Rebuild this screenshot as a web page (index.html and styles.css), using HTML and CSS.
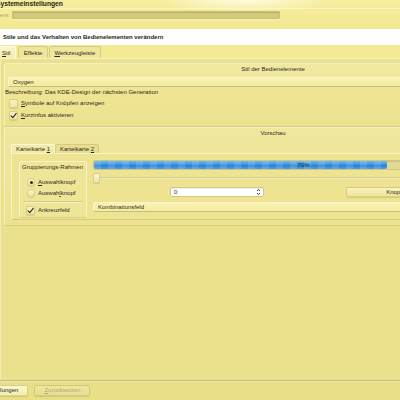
FILE: index.html
```html
<!DOCTYPE html>
<html lang="de">
<head>
<meta charset="utf-8">
<title>Systemeinstellungen</title>
<link rel="stylesheet" href="styles.css">
</head>
<body>
<div class="window">
  <div class="header">
    <div class="title"><span class="title-text">Systemeinstellungen</span></div>
    <div class="search">
      <span class="search-label">ers:</span>
      <div class="search-field"></div>
    </div>
  </div>
  <div class="banner">Stile und das Verhalten von Bedienelementen verändern</div>
  <div class="tabs">
    <div class="tab active"><u>S</u>til</div>
    <div class="tab">Effekte</div>
    <div class="tab"><u>W</u>erkzeugleiste</div>
  </div>
  <div class="tabpanel">
    <div class="group style-group">
      <div class="group-title">Stil der Bedienelemente</div>
      <div class="combo style-combo">Oxygen</div>
      <div class="desc">Beschreibung: Das KDE-Design der nächsten Generation</div>
      <div class="check-row">
        <span class="checkbox"></span>
        <span><u>S</u>ymbole auf Knöpfen anzeigen</span>
      </div>
      <div class="check-row second">
        <span class="checkbox"><svg viewBox="0 0 9 9" width="9" height="9"><path d="M2 4.8 L3.8 6.6 L7.2 2.4" fill="none" stroke="#2e2c1e" stroke-width="1.1" stroke-linecap="round" stroke-linejoin="round"/></svg></span>
        <span><u>K</u>urzinfos aktivieren</span>
      </div>
    </div>
    <div class="group preview-group">
      <div class="group-title">Vorschau</div>
      <div class="inner-tabs">
        <div class="itab active">Karteikarte <u>1</u></div>
        <div class="itab">Karteikarte <u>2</u></div>
      </div>
      <div class="inner-page">
        <div class="groupbox">
          <div class="gb-title">Gruppierungs-Rahmen</div>
          <div class="radio-row first">
            <span class="radio checked"></span>
            <span><u>A</u>uswahlknopf</span>
          </div>
          <div class="radio-row">
            <span class="radio"></span>
            <span>Auswah<u>l</u>knopf</span>
          </div>
          <div class="gb-sep"></div>
          <div class="gb-check">
            <span class="checkbox"><svg viewBox="0 0 9 9" width="9" height="9"><path d="M2 4.8 L3.8 6.6 L7.2 2.4" fill="none" stroke="#2e2c1e" stroke-width="1.1" stroke-linecap="round" stroke-linejoin="round"/></svg></span>
            <span>Ankreuzfeld</span>
          </div>
        </div>
        <div class="controls">
          <div class="progress">
            <div class="progress-fill" style="width:70%"></div>
            <span class="progress-label">70%</span>
          </div>
          <div class="slider">
            <span class="slider-handle"></span>
            <span class="slider-groove"></span>
          </div>
          <div class="spin-row">
            <div class="spinbox">
              <span>0</span>
              <svg class="spin-arrows" viewBox="0 0 5 8" width="5" height="8"><path d="M1 3 L2.5 1.4 L4 3 M1 5 L2.5 6.6 L4 5" fill="none" stroke="#2e2c1e" stroke-width="0.9"/></svg>
            </div>
            <div class="button knopf">Knopf</div>
          </div>
          <div class="combo preview-combo">Kombinationsfeld</div>
        </div>
      </div>
    </div>
  </div>
  <div class="footer">
    <div class="button defaults">Voreinstellungen</div>
    <div class="button disabled"><u>Z</u>urücksetzen</div>
  </div>
</div>
</body>
</html>
```

FILE: styles.css
```css
* { box-sizing: border-box; margin: 0; padding: 0; }
html, body { width: 400px; height: 400px; overflow: hidden; }
body {
  background: #e9df87;
  font-family: "Liberation Sans", Arial, sans-serif;
  font-size: 6px;
  line-height: 1;
  color: #2b2a1e;
}
u { text-decoration: underline; text-underline-offset: 1px; text-decoration-thickness: 0.5px; }

.window {
  width: 545px;
  height: 400px;
  display: flex;
  flex-direction: column;
}

/* header */
.header {
  height: 29px;
  background:
    radial-gradient(ellipse 90px 12px at 245px 0, #fffbe0 0%, rgba(255, 251, 224, 0) 100%),
    linear-gradient(#f6ed9e, #f3e890);
}
.title {
  height: 9px;
  border-bottom: 1px solid rgba(255, 255, 255, 0.45);
  font-weight: bold;
  font-size: 6.7px;
  line-height: 8px;
  color: #1f1e14;
}
.title-text { display: inline-block; margin-left: -4px; }
.search {
  display: flex;
  align-items: flex-start;
  padding-top: 2px;
  height: 20px;
}
.search-label {
  width: 12px;
  color: #aaa374;
  line-height: 8px;
  overflow: hidden;
}
.search-field {
  width: 268px;
  height: 8px;
  background: #d4ca7c;
  border: 1px solid #c8be70;
  border-radius: 1px;
  box-shadow: inset 0 1px 1px rgba(0, 0, 0, 0.12), 0 1px 0 rgba(255, 255, 255, 0.4);
}

/* banner */
.banner {
  height: 16px;
  background: #ffffff;
  font-weight: bold;
  line-height: 16px;
  padding-left: 3px;
  color: #1e1e1a;
}

/* top tabs */
.tabs {
  height: 13px;
  background: #f4ea94;
  display: flex;
  align-items: flex-end;
  gap: 1px;
  margin-left: -4px;
}
.tab {
  height: 12px;
  line-height: 12px;
  padding: 0 4.5px;
  background: #efe59b;
  border: 1px solid rgba(196, 186, 116, 0.6);
  border-bottom: none;
  border-radius: 2px 2px 0 0;
  color: #2b2a1e;
}
.tab.active {
  padding: 0 5px;
  margin-right: 1px;
  background: linear-gradient(#fbf5c6, #f4eca8);
  border-color: rgba(255, 255, 255, 0.7);
}

/* tab panel */
.tabpanel {
  flex: 1;
  background: #ebe18c;
  border-top: 1px solid rgba(255, 255, 255, 0.55);
  border-left: 1px solid rgba(255, 255, 255, 0.35);
  padding: 4px 0 0 3px;
}

.group {
  width: 538px;
  border: 1px solid rgba(255, 255, 255, 0.45);
  border-bottom-color: rgba(170, 160, 90, 0.35);
  border-radius: 3px;
}
.group-title {
  height: 11px;
  line-height: 11px;
  text-align: center;
}

.style-group {
  height: 64px;
  background: linear-gradient(#f2e9a0 0, #f1e89f 14px, #eee494 26px, #ece28e 100%);
}
.combo {
  height: 10px;
  line-height: 9px;
  padding-left: 4px;
  background: linear-gradient(#faf2b0, #f3eba0);
  border: 1px solid rgba(255, 255, 255, 0.5);
  border-bottom: 1px solid #c6bc7c;
  border-radius: 2px;
}
.style-combo {
  margin: 2px 3px 0 3px;
}
.desc {
  margin-top: 1px;
  height: 8px;
  line-height: 8px;
}
.check-row {
  display: flex;
  align-items: center;
  gap: 3px;
  height: 10px;
  margin-top: 2px;
  padding-left: 4px;
}
.checkbox {
  width: 9px;
  height: 9px;
  flex: none;
  border-radius: 2px;
  background: linear-gradient(#f9f2c0, #efe6a4);
  border: 1px solid rgba(190, 180, 110, 0.55);
  box-shadow: 0 1px 1px rgba(120, 110, 50, 0.2);
  display: flex;
  align-items: center;
  justify-content: center;
}
.checkbox svg { display: block; margin: -1px; }

.preview-group {
  height: 99px;
  background: linear-gradient(#efe79c 0, #efe69b 26px, #ece28f 100%);
}
.inner-tabs {
  display: flex;
  margin: 5px 0 0 6px;
  height: 9px;
}
.itab {
  height: 9px;
  line-height: 9px;
  padding: 0 4px;
  background: #e8de90;
  border: 1px solid rgba(196, 186, 116, 0.55);
  border-bottom: none;
  border-radius: 2px 2px 0 0;
}
.itab.active {
  background: #f3eba5;
  border-color: rgba(255, 255, 255, 0.65);
}
.inner-page {
  margin: 0 6px;
  height: 67px;
  display: flex;
  gap: 6px;
  padding: 7px 0 0 7px;
  background: #ede391;
  border: 1px solid rgba(255, 255, 255, 0.5);
  border-bottom-color: rgba(170, 160, 90, 0.35);
  border-radius: 0 3px 3px 3px;
}

.groupbox {
  width: 68px;
  height: 57px;
  flex: none;
  border: 1px solid rgba(255, 255, 255, 0.55);
  border-bottom-color: rgba(170, 160, 90, 0.3);
  border-radius: 3px;
  background: #eee596;
  padding: 0 0 0 7px;
}
.gb-title {
  height: 10px;
  line-height: 10px;
  margin-left: -5px;
}
.radio-row {
  display: flex;
  align-items: center;
  gap: 3px;
  height: 8px;
  margin-top: 3px;
}
.radio-row.first { margin-top: 6px; }
.radio {
  width: 8px;
  height: 8px;
  flex: none;
  border-radius: 50%;
  background: linear-gradient(#faf3c4, #efe6a4);
  border: 1px solid rgba(190, 180, 110, 0.45);
  box-shadow: 0 1px 1px rgba(120, 110, 50, 0.2);
  display: flex;
  align-items: center;
  justify-content: center;
}
.radio.checked::after {
  content: "";
  width: 3px;
  height: 3px;
  border-radius: 50%;
  background: #2e2c1e;
}
.gb-sep {
  margin: 4px 4px 0 -3px;
  height: 2px;
  border-top: 1px solid rgba(180, 170, 100, 0.45);
  border-bottom: 1px solid rgba(255, 255, 255, 0.45);
}
.gb-check {
  display: flex;
  align-items: center;
  gap: 3px;
  height: 10px;
  margin: 2px 0 0 -1px;
}

.controls {
  width: 421px;
  margin-top: -1px;
  display: flex;
  flex-direction: column;
}
.progress {
  position: relative;
  height: 10px;
  background: #e2d895;
  border: 1px solid rgba(190, 180, 110, 0.5);
  border-radius: 2px;
  box-shadow: inset 0 1px 1px rgba(0, 0, 0, 0.1);
}
.progress-fill {
  height: 100%;
  border-radius: 2px;
  background:
    repeating-linear-gradient(90deg, rgba(255, 255, 255, 0.13) 0 7px, rgba(255, 255, 255, 0) 7px 14px),
    linear-gradient(#6db8f2, #3c94e0 45%, #2a80d3 55%, #4aa0e6);
}
.progress-label {
  position: absolute;
  left: 0;
  right: 0;
  top: 0;
  line-height: 8px;
  text-align: center;
  color: #1d2a3a;
}
.slider {
  display: flex;
  align-items: center;
  height: 10px;
  margin-top: 3px;
}
.slider-handle {
  width: 7px;
  height: 10px;
  flex: none;
  border-radius: 2px;
  background: linear-gradient(#fbf5cc, #f0e8a8);
  border: 1px solid rgba(190, 180, 110, 0.5);
  box-shadow: 0 1px 1px rgba(120, 110, 50, 0.2);
}
.slider-groove {
  flex: 1;
  height: 2px;
  background: #d9cf86;
  border-bottom: 1px solid rgba(255, 255, 255, 0.5);
}
.spin-row {
  display: flex;
  align-items: center;
  height: 10px;
  margin-top: 4px;
  padding-left: 77px;
  gap: 82px;
}
.spinbox {
  width: 94px;
  height: 10px;
  background: #ffffff;
  border: 1px solid #d2c88a;
  border-radius: 2px;
  display: flex;
  align-items: center;
  justify-content: space-between;
  padding: 0 2px 0 3px;
  box-shadow: inset 0 1px 1px rgba(0, 0, 0, 0.08);
}
.spin-arrows { display: block; }
.button {
  height: 11px;
  line-height: 9px;
  text-align: center;
  padding: 0 9px;
  background: linear-gradient(#f9f2be, #eee597);
  border: 1px solid rgba(190, 180, 110, 0.55);
  border-radius: 2px;
  box-shadow: 0 1px 1px rgba(120, 110, 50, 0.2);
}
.knopf {
  width: 96px;
  height: 10px;
  line-height: 8px;
}
.preview-combo {
  margin-top: 5px;
}

/* footer */
.footer {
  height: 20px;
  flex: none;
  border-top: 1px solid #c5bd86;
  display: flex;
  align-items: flex-start;
  gap: 6px;
  padding-top: 4px;
  box-shadow: inset 0 1px 0 rgba(255, 255, 255, 0.3);
}
.defaults {
  margin-left: -36px;
  background: linear-gradient(#fcf7d2, #f4eda9);
}
.disabled {
  color: #b3aa72;
  background: linear-gradient(#efe6a0, #e7dd92);
}
```
